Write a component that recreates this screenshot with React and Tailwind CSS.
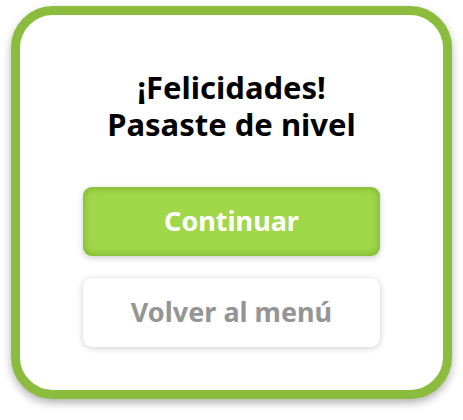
import React from 'react';

const App = () => {
  return (
    <div className="min-h-screen bg-white pt-[6px] pl-[11px]" style={{ fontFamily: '"Noto Sans", "DejaVu Sans", sans-serif' }}>
      {/* Level complete card */}
      <div className="w-[441px] h-[393px] rounded-[42px] border-[9px] border-[#8cbc3e] bg-white shadow-[0_4px_8px_rgba(0,0,0,0.3)] flex flex-col items-center pt-[54px]">
        <h1 className="text-[31px] leading-[37px] font-bold text-black text-center">
          <span className="block">¡Felicidades!</span>
          <span className="block">Pasaste de nivel</span>
        </h1>

        <div className="mt-[44px] flex flex-col gap-[22px]">
          <button className="w-[297px] h-[69px] rounded-[9px] bg-[#a0d84a] text-white text-[27px] font-bold shadow-[inset_0_0_8px_rgba(90,140,20,0.6),0_2px_6px_rgba(0,0,0,0.2)]">
            Continuar
          </button>
          <button className="w-[297px] h-[69px] rounded-[9px] bg-white text-[#959595] text-[27px] font-bold shadow-[0_1px_6px_rgba(0,0,0,0.2)]">
            Volver al menú
          </button>
        </div>
      </div>
    </div>
  );
};

export default App;
